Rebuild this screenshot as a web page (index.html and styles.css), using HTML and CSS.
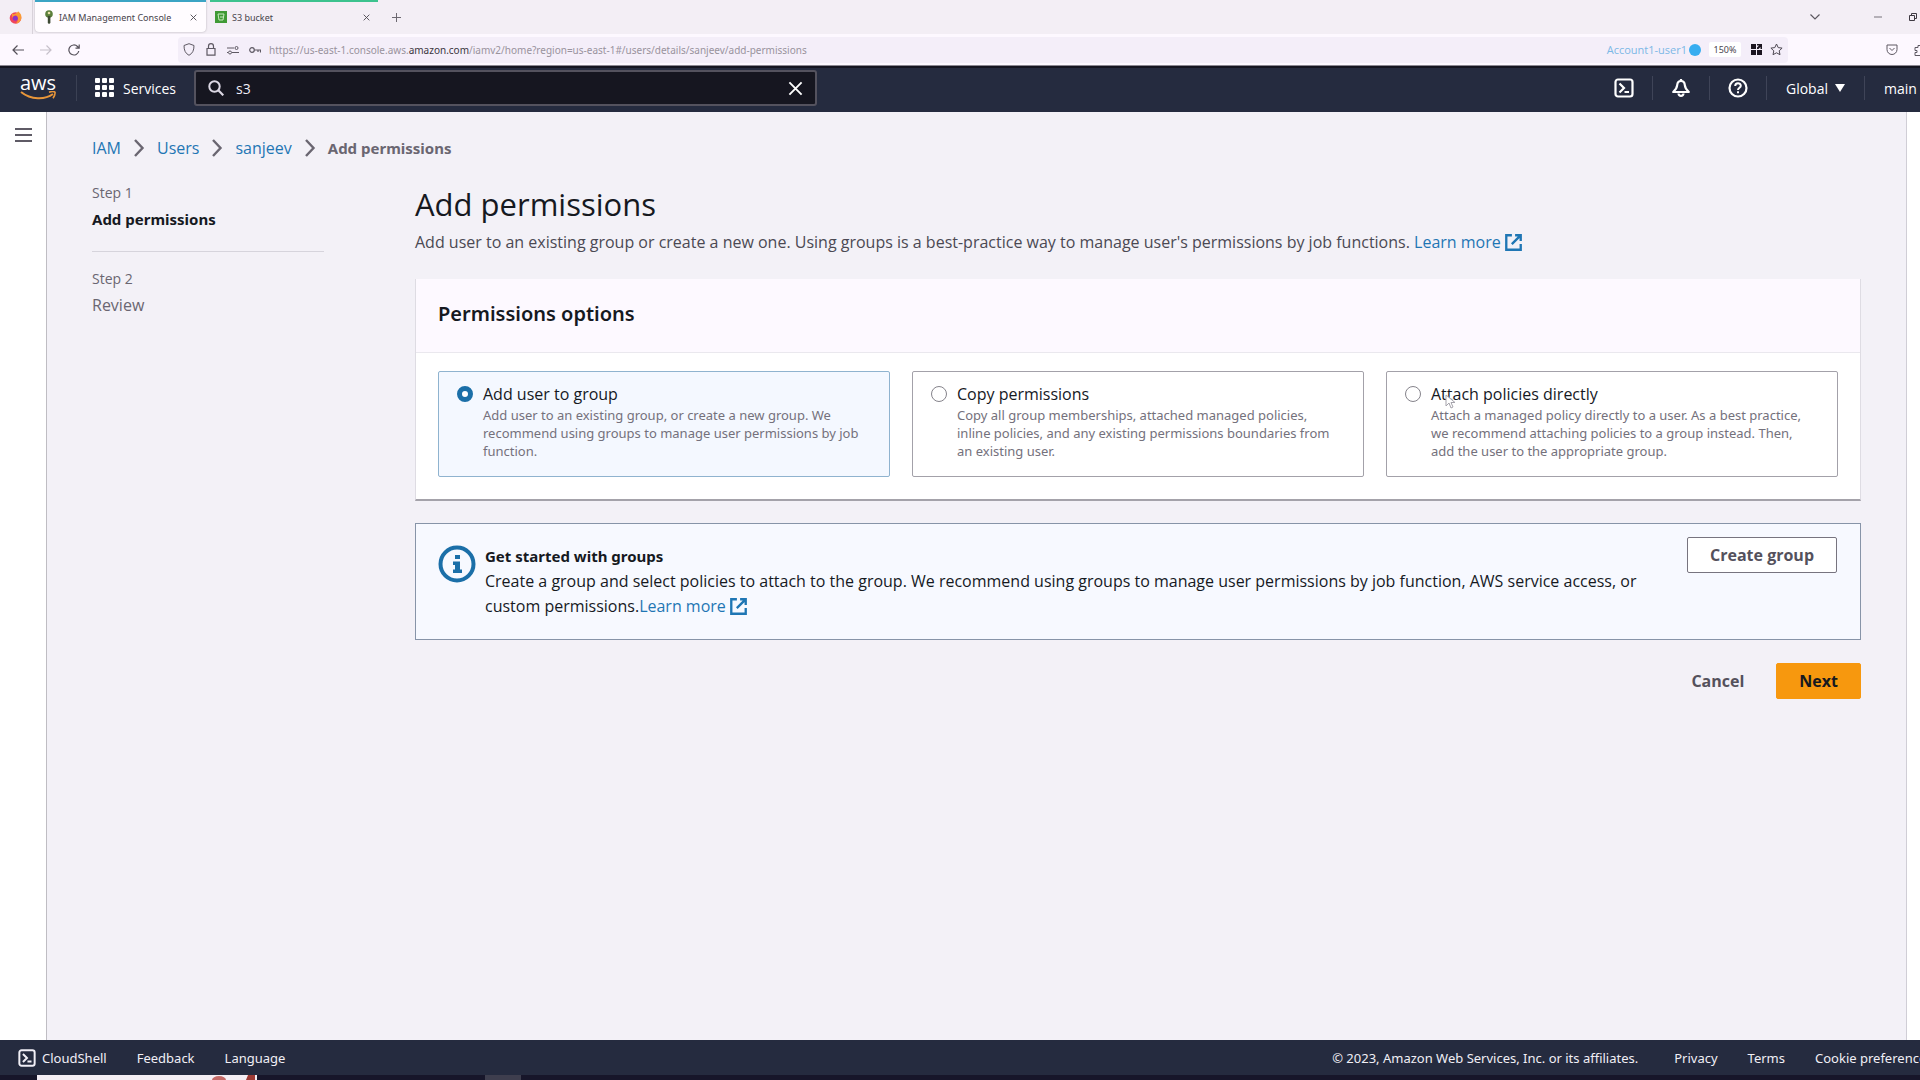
FILE: index.html
```html
<!DOCTYPE html>
<html lang="en">
<head>
  <meta charset="UTF-8">
  <meta name="viewport" content="width=device-width, initial-scale=1.0">
  <title>IAM Management Console</title>
  <link rel="stylesheet" href="styles.css">
</head>
<body>
  <!-- shared icons -->
  <svg class="defs" aria-hidden="true">
    <symbol id="i-external" viewBox="0 0 16 16">
      <path d="M6.5 1.2H1.2v13.6h13.6V9.5M9.5 1.2h5.3v5.3M14.4 1.6L6.4 9.6" fill="none" stroke="currentColor" stroke-width="2.2"/>
    </symbol>
    <symbol id="i-shell" viewBox="0 0 20 20">
      <rect x="1.5" y="1.5" width="17" height="17" rx="2.5" fill="none" stroke="currentColor" stroke-width="2.2"/>
      <path d="M5.5 5.5L10 10l-4.5 4.5M10.5 14h4.5" fill="none" stroke="currentColor" stroke-width="2.2"/>
    </symbol>
    <symbol id="i-chevron" viewBox="0 0 12 18">
      <path d="M2 1l7.500 8L2 17" fill="none" stroke="currentColor" stroke-width="2.4"/>
    </symbol>
    <symbol id="i-close" viewBox="0 0 16 16">
      <path d="M1.5 1.5l13 13M14.5 1.5l-13 13" fill="none" stroke="currentColor" stroke-width="2"/>
    </symbol>
  </svg>

  <div class="tabs">
    <div class="firefox">
      <svg width="13" height="13" viewBox="0 0 13 13">
        <circle cx="6.5" cy="7" r="5.800" fill="#f0455c"/>
        <path d="M3 2l1.500 1.500C8 2 9 1.500 9 .3c3 2 4 5 3.200 7.700-.6 2.500-3 4.600-5.700 4.600C9 11 9.500 8 8 5 6 4 4 5 3.200 7z" fill="#fb9a34"/>
        <circle cx="6.300" cy="7.300" r="2.500" fill="#8a35c9"/>
      </svg>
    </div>
    <div class="tab active">
      <svg width="10" height="14" viewBox="0 0 10 14">
        <circle cx="5" cy="4" r="3.800" fill="#5b7f3c"/>
        <path d="M3.800 6h2.600v7L5 14l-1.200-1z" fill="#3d4a34"/>
        <circle cx="5" cy="3" r="1.300" fill="#e9e2a8"/>
      </svg>
      <span>IAM Management Console</span>
      <button class="tab-close" aria-label="Close tab"><svg width="7" height="7"><use href="#i-close"/></svg></button>
    </div>
    <div class="tab bucket">
      <svg width="12" height="12" viewBox="0 0 12 12">
        <rect width="12" height="12" fill="#3f9a35"/>
        <path d="M3 3h6l-1 6H4zM5 6h4" fill="none" stroke="#c9ecc0" stroke-width="1"/>
      </svg>
      <span>S3 bucket</span>
      <button class="tab-close" aria-label="Close tab"><svg width="7" height="7"><use href="#i-close"/></svg></button>
    </div>
    <button class="new-tab" aria-label="New tab">
      <svg width="9" height="9" viewBox="0 0 9 9"><path d="M4.500 0v9M0 4.500h9" stroke="#6c6870"/></svg>
    </button>
    <div class="window-buttons">
      <svg width="10" height="6" viewBox="0 0 10 6"><path d="M.5.500L5 5l4.500-4.500" fill="none" stroke="#5c5860" stroke-width="1.200"/></svg>
      <svg width="8" height="8" viewBox="0 0 8 8"><path d="M0 4h8" stroke="#77737b"/></svg>
      <svg width="8" height="8" viewBox="0 0 8 8"><path d="M.5 2.500h5v5h-5zM2.500 2.500v-2h5v5h-2" fill="none" stroke="#3e3a42"/></svg>
    </div>
  </div>

  <div class="toolbar">
    <div class="toolbar-nav">
      <button aria-label="Back"><svg width="12" height="12" viewBox="0 0 12 12"><path d="M12 6H1M5.500 1.500L1 6l4.500 4.500" fill="none" stroke="#55515a" stroke-width="1.200"/></svg></button>
      <button aria-label="Forward"><svg width="12" height="12" viewBox="0 0 12 12"><path d="M0 6h11M6.500 1.500L11 6l-4.500 4.500" fill="none" stroke="#c6c0ca" stroke-width="1.200"/></svg></button>
      <button aria-label="Reload"><svg width="12" height="12" viewBox="0 0 12 12"><path d="M10.800 7A5 5 0 1 1 9.500 2.500L11 4M11.200.500V4.200H7.500" fill="none" stroke="#55515a" stroke-width="1.200"/></svg></button>
    </div>
    <div class="address">
      <div class="address-icons">
        <svg width="12" height="13" viewBox="0 0 12 13"><path d="M6 .7l5 1.800c0 5-1.500 8-5 9.800C2.500 10.500 1 7.500 1 2.500z" fill="none" stroke="#5e5963"/></svg>
        <svg width="12" height="13" viewBox="0 0 12 13"><path d="M2 5.500h8v6.700H2zM3.500 5.500V3.200a2.500 2.500 0 0 1 5 0v2.300" fill="none" stroke="#5e5963" stroke-width="1.200"/></svg>
        <svg width="12" height="10" viewBox="0 0 12 10"><path d="M0 3h7M5 7.500h7M0 7.500h1" stroke="#5e5963"/><circle cx="9.500" cy="3" r="1.500" fill="none" stroke="#5e5963"/><circle cx="3" cy="7.500" r="1.500" fill="none" stroke="#5e5963"/></svg>
        <svg width="12" height="8" viewBox="0 0 12 8"><circle cx="3" cy="4" r="2.300" fill="none" stroke="#5e5963" stroke-width="1.200"/><path d="M5.300 4h6.200v2.500M9 4v2" fill="none" stroke="#5e5963" stroke-width="1.200"/></svg>
      </div>
      <span class="url">https://us-east-1.console.aws.<b>amazon.com</b>/iamv2/home?region=us-east-1#/users/details/sanjeev/add-permissions</span>
      <span class="container-name">Account1-user1</span>
      <span class="container-dot"></span>
      <span class="zoom-level">150%</span>
      <svg width="11" height="11" viewBox="0 0 11 11"><path d="M0 0h5v5H0zM0 6h5v5H0zM6 6h5v5H6zM6 0h5v5H9.500V3L7.500 5H6V3.500l2-2H6z" fill="#1b1520"/></svg>
      <svg width="13" height="13" viewBox="0 0 13 13"><path d="M6.500 1l1.700 3.600 3.900.5-2.900 2.700.8 3.900-3.500-1.900L3 11.700l.8-3.900L.9 5.100l3.900-.5z" fill="none" stroke="#4d4852"/></svg>
    </div>
    <div class="toolbar-end">
      <svg width="12" height="12" viewBox="0 0 12 12"><path d="M1 1h10v4.500a5 5 0 0 1-10 0zM3.500 4L6 6.500 8.500 4" fill="none" stroke="#5e5963"/></svg>
      <svg width="6" height="12" viewBox="0 0 6 12"><path d="M7 1.500H4v2H1v3h2v2H1v3h6" fill="none" stroke="#5e5963"/></svg>
    </div>
  </div>

  <header class="aws-nav">
    <a class="logo" href="#" aria-label="AWS home">
      <span>aws</span>
      <svg width="37" height="10" viewBox="0 0 37 10"><path d="M1 1c10 8 24 8 32 2" fill="none" stroke="#e8963a" stroke-width="2"/><path d="M29 1.200c3-1 5-1 6 0 .3 2-.5 4-2 6" fill="none" stroke="#e8963a" stroke-width="1.600"/></svg>
    </a>
    <button class="services">
      <svg width="20" height="20" viewBox="0 0 20 20" fill="#fff">
        <rect width="5" height="5" rx="1"/><rect x="7" width="5" height="5" rx="1"/><rect x="14" width="5" height="5" rx="1"/>
        <rect y="7" width="5" height="5" rx="1"/><rect x="7" y="7" width="5" height="5" rx="1"/><rect x="14" y="7" width="5" height="5" rx="1"/>
        <rect y="14" width="5" height="5" rx="1"/><rect x="7" y="14" width="5" height="5" rx="1"/><rect x="14" y="14" width="5" height="5" rx="1"/>
      </svg>
      Services
    </button>
    <div class="search">
      <svg width="16" height="16" viewBox="0 0 16 16"><circle cx="6.500" cy="6.500" r="5.200" fill="none" stroke="#dcd8e4" stroke-width="2"/><path d="M10.300 10.300L15.300 15.300" stroke="#dcd8e4" stroke-width="2.200"/></svg>
      <input type="text" value="s3" aria-label="Search">
      <button aria-label="Clear search"><svg width="15" height="15"><use href="#i-close"/></svg></button>
    </div>
    <div class="nav-tools">
      <button aria-label="CloudShell"><svg width="20" height="20"><use href="#i-shell"/></svg></button>
      <button aria-label="Notifications">
        <svg width="20" height="20" viewBox="0 0 20 20"><path d="M10 3c-2.500 0-3.600 1.500-3.800 4-.2 3-1.300 4.500-4 7h15.600c-2.700-2.500-3.800-4-4-7-.2-2.500-1.300-4-3.800-4z" fill="none" stroke="#fff" stroke-width="2.200" stroke-linejoin="round"/><path d="M10 1v2M7.500 15.500c.3 3.200 4.700 3.200 5 0" fill="none" stroke="#fff" stroke-width="2.200"/></svg>
      </button>
      <button aria-label="Help">
        <svg width="20" height="20" viewBox="0 0 20 20"><circle cx="10" cy="10" r="8.500" fill="none" stroke="#fff" stroke-width="2.200"/><path d="M7.200 8c0-3.600 5.600-3.600 5.600-.3 0 2-2.800 2-2.800 4.300M10 13.300v2" fill="none" stroke="#fff" stroke-width="2"/></svg>
      </button>
      <button class="region">Global <svg width="10" height="8" viewBox="0 0 10 8"><path d="M0 0h10L5 8z" fill="#fff"/></svg></button>
      <button class="account">main</button>
    </div>
  </header>

  <div class="page">
    <aside class="rail">
      <button aria-label="Open navigation"><svg width="17" height="16" viewBox="0 0 17 16"><path d="M0 2h17M0 8h17M0 14h17" stroke="#5f5b66" stroke-width="2"/></svg></button>
    </aside>

    <main class="content">
      <nav class="breadcrumb" aria-label="Breadcrumb">
        <a href="#">IAM</a>
        <svg width="12" height="18"><use href="#i-chevron"/></svg>
        <a href="#">Users</a>
        <svg width="12" height="18"><use href="#i-chevron"/></svg>
        <a href="#">sanjeev</a>
        <svg width="12" height="18"><use href="#i-chevron"/></svg>
        <span>Add permissions</span>
      </nav>

      <div class="wizard">
        <ol class="steps">
          <li class="current"><small>Step 1</small><span>Add permissions</span></li>
          <li><small>Step 2</small><span>Review</span></li>
        </ol>

        <form class="form">
          <h1>Add permissions</h1>
          <p class="intro">Add user to an existing group or create a new one. Using groups is a best-practice way to manage user's permissions by job functions. <a href="#">Learn more <svg width="17" height="17"><use href="#i-external"/></svg></a></p>

          <section class="panel">
            <h2>Permissions options</h2>
            <div class="options">
              <label class="option">
                <input type="radio" name="mode" checked>
                <span class="option-title">Add user to group</span>
                <span class="option-text">Add user to an existing group, or create a new group. We<br>recommend using groups to manage user permissions by job<br>function.</span>
              </label>
              <label class="option">
                <input type="radio" name="mode">
                <span class="option-title">Copy permissions</span>
                <span class="option-text">Copy all group memberships, attached managed policies,<br>inline policies, and any existing permissions boundaries from<br>an existing user.</span>
              </label>
              <label class="option">
                <input type="radio" name="mode">
                <span class="option-title">Attach policies directly
                  <svg class="pointer" width="12" height="16" viewBox="0 0 12 16"><path d="M1 1v11l3-3 2 5 2-1-2-4.500h4z" fill="#fff" stroke="#a5a3ab"/></svg>
                </span>
                <span class="option-text">Attach a managed policy directly to a user. As a best practice,<br>we recommend attaching policies to a group instead. Then,<br>add the user to the appropriate group.</span>
              </label>
            </div>
          </section>

          <section class="info">
            <svg class="info-icon" width="38" height="38" viewBox="0 0 38 38"><circle cx="19" cy="19" r="16.500" fill="none" stroke="#1b6fa8" stroke-width="4"/><path d="M17 10h5v4h-5zM15 16.500h7v8h2v3.500h-9v-3.500h2v-4.500h-2z" fill="#1b6fa8"/></svg>
            <div class="info-text">
              <strong>Get started with groups</strong>
              <p>Create a group and select policies to attach to the group. We recommend using groups to manage user permissions by job function, AWS service access, or<br>custom permissions.<a href="#">Learn more <svg width="17" height="17"><use href="#i-external"/></svg></a></p>
            </div>
            <button type="button" class="btn">Create group</button>
          </section>

          <div class="actions">
            <button type="button" class="btn link">Cancel</button>
            <button type="button" class="btn primary">Next</button>
          </div>
        </form>
      </div>
    </main>
    <div class="right-rail"></div>
  </div>

  <footer class="footer">
    <a href="#" class="shell"><svg width="18" height="18"><use href="#i-shell"/></svg>CloudShell</a>
    <a href="#">Feedback</a>
    <a href="#">Language</a>
    <span class="copyright">© 2023, Amazon Web Services, Inc. or its affiliates.</span>
    <a href="#">Privacy</a>
    <a href="#">Terms</a>
    <a href="#" class="cookies">Cookie preferences</a>
  </footer>
  <div class="taskbar">
    <svg class="task-search" width="220" height="5" viewBox="0 0 220 5"><path d="M0 0h220v5H0z" fill="#f4eef4"/><path d="M175 5a7 4 0 0 1 14 0z" fill="#c46a68"/><path d="M211 0h7v5h-9z" fill="#9c3a34"/></svg>
    <span class="task-item"></span>
  </div>
</body>
</html>
```

FILE: styles.css
```css
* {
  box-sizing: border-box;
}
body {
  margin: 0;
  height: 100vh;
  display: flex;
  flex-direction: column;
  overflow: hidden;
  font-family: "Open Sans", "Noto Sans", sans-serif;
  font-size: 16px;
  color: #16191f;
  background: #f3f1f7;
}
button {
  font: inherit;
  color: inherit;
  background: none;
  border: none;
  padding: 0;
  cursor: pointer;
}
svg {
  flex: none;
}
a {
  color: #1f76b4;
  text-decoration: none;
}
.defs {
  position: absolute;
  width: 0;
  height: 0;
}

/* browser chrome */
.tabs {
  display: flex;
  align-items: stretch;
  height: 34px;
  flex: none;
  background: #f3eef5;
  font-family: "Noto Sans", sans-serif;
  font-size: 9px;
  color: #47434b;
}
.firefox {
  width: 33px;
  display: flex;
  align-items: center;
  padding-left: 9px;
  border-right: 1px solid #d8d2da;
}
.tab {
  display: flex;
  align-items: center;
  gap: 5px;
  width: 171px;
  margin: 0 2px 2px;
  padding: 0 9px;
  border-top: 2px solid #3ba4c4;
}
.tab.active {
  background: #fffcff;
  border-radius: 0 0 4px 4px;
  box-shadow: 0 0 2px #a8a2aa;
}
.tab.bucket {
  width: 168px;
  padding: 0 8px 0 5px;
  border-top-color: #3cc28e;
}
.tab-close {
  margin-left: auto;
  display: flex;
}
.new-tab {
  display: flex;
  align-items: center;
  margin-left: 12px;
}
.window-buttons {
  display: flex;
  align-items: center;
  margin-left: auto;
  gap: 27px;
  padding-right: 3px;
}
.window-buttons svg:first-child {
  margin-right: 27px;
}
.toolbar {
  display: flex;
  align-items: center;
  height: 32px;
  flex: none;
  background: #fdf8ff;
  border-bottom: 1px solid #8b8791;
}
.toolbar-nav {
  display: flex;
  gap: 16px;
  width: 178px;
  padding-left: 12px;
}
.toolbar-nav button {
  display: flex;
}
.address {
  flex: 1;
  display: flex;
  align-items: center;
  gap: 8px;
  height: 26px;
  padding: 0 5px;
  background: #f4eef9;
  border-radius: 4px;
  font-family: "Noto Sans", sans-serif;
  font-size: 10px;
  color: #99939d;
}
.address-icons {
  display: flex;
  align-items: center;
  gap: 10px;
}
.url {
  margin-right: auto;
}
.url b {
  font-weight: normal;
  color: #3b3640;
}
.container-name {
  font-family: "Open Sans", sans-serif;
  font-size: 11px;
  color: #7cb8e6;
}
.container-dot {
  width: 12px;
  height: 12px;
  margin-left: -6px;
  border-radius: 50%;
  background: #37adf0;
}
.zoom-level {
  width: 32px;
  margin-right: 2px;
  text-align: center;
  font-size: 9px;
  line-height: 15px;
  color: #4a454f;
  background: #fff;
  border-radius: 2px;
}
.toolbar-end {
  display: flex;
  justify-content: flex-end;
  gap: 16px;
  width: 132px;
}

/* console header */
.aws-nav {
  display: flex;
  align-items: center;
  height: 46px;
  flex: none;
  padding-bottom: 2px;
  background: #252b3f;
  box-shadow: inset 0 2px #151521;
  color: #fff;
  font-size: 14px;
}
.logo {
  display: flex;
  flex-direction: column;
  align-items: center;
  width: 77px;
  color: #fff;
  font-size: 20px;
  line-height: 16px;
  border-right: 1px solid #3b4154;
}
.services {
  display: flex;
  align-items: center;
  gap: 8px;
  width: 117px;
  padding-left: 18px;
}
.search {
  display: flex;
  align-items: center;
  gap: 12px;
  width: 623px;
  height: 36px;
  padding: 0 12px;
  background: #161620;
  border: 2px solid #54525e;
  border-radius: 3px;
}
.search input {
  flex: 1;
  min-width: 0;
  padding: 0;
  border: none;
  outline: none;
  background: none;
  color: #f0edf5;
  font: inherit;
}
.search button {
  display: flex;
}
.nav-tools {
  display: flex;
  margin-left: auto;
}
.nav-tools button {
  display: flex;
  align-items: center;
  justify-content: center;
  width: 57px;
  height: 24px;
  border-right: 1px solid #3f4458;
}
.nav-tools .region {
  width: 98px;
  gap: 7px;
}
.nav-tools .account {
  justify-content: flex-start;
  width: 55px;
  padding-left: 19px;
  border: none;
}

/* page */
.page {
  flex: 1;
  display: flex;
  min-height: 0;
}
.rail {
  width: 47px;
  padding: 15px 0 0 15px;
  background: #fff;
  border-right: 1px solid #bfbdc3;
}
.rail button {
  display: block;
}
.rail svg {
  display: block;
}
.right-rail {
  width: 14px;
  background: #fff;
  border-left: 1px solid #d0ced6;
}
.content {
  flex: 1;
  padding: 24px 45px 0;
}
.breadcrumb {
  display: flex;
  align-items: center;
  gap: 12px;
  height: 24px;
  font-size: 16px;
  color: #6a6671;
}
.breadcrumb span {
  font-family: "Noto Sans", sans-serif;
  font-size: 15px;
  font-weight: 700;
}
.wizard {
  display: grid;
  grid-template-columns: 232px 1fr;
  column-gap: 91px;
  margin-top: 20px;
}
.steps {
  list-style: none;
  margin: 0;
  padding: 0;
  color: #6a6671;
  line-height: 26px;
}
.steps li {
  padding-top: 14px;
}
.steps small,
.steps span {
  display: block;
}
.steps small {
  font-size: 14px;
}
.steps .current {
  padding: 0 0 19px;
  border-bottom: 1px solid #d6d4dc;
}
.steps .current span {
  color: #16191f;
  font-family: "Noto Sans", sans-serif;
  font-size: 15px;
  font-weight: 700;
}
h1 {
  margin: 0;
  font-size: 31px;
  font-weight: 400;
  line-height: 48px;
}
.intro {
  margin: 0;
  line-height: 28px;
  color: #4b4953;
}
a svg {
  vertical-align: -3px;
}
.panel {
  margin-top: 23px;
  background: #fff;
  border: 1px solid #dedce3;
  border-top: none;
  border-bottom: 2px solid #a4a2aa;
}
h2 {
  margin: 0;
  padding: 21px 22px 24px;
  font-family: "Noto Sans", sans-serif;
  font-size: 20px;
  line-height: 28px;
  font-weight: 600;
  background: #fdf9ff;
  border-bottom: 1px solid #eae8ee;
}
.options {
  display: grid;
  grid-template-columns: repeat(3, 1fr);
  gap: 22px;
  padding: 18px 22px 22px;
}
.option {
  display: grid;
  grid-template-columns: 16px 1fr;
  column-gap: 10px;
  padding: 10px 0 15px 18px;
  border: 1px solid #a3a1a9;
  border-radius: 2px;
  white-space: nowrap;
}
.option:has(input:checked) {
  background: #f4f8ff;
  border-color: #8fb3cf;
}
.option input {
  appearance: none;
  align-self: center;
  width: 16px;
  height: 16px;
  margin: 0;
  border: 1px solid #85838b;
  border-radius: 50%;
  background: #fff;
}
.option input:checked {
  border: 5px solid #1b6fa8;
}
.option-title {
  position: relative;
  line-height: 24px;
}
.option-text {
  grid-column: 2;
  font-family: "Noto Sans", sans-serif;
  font-size: 13px;
  line-height: 18px;
  padding-bottom: 1px;
  color: #74717c;
}
.pointer {
  position: absolute;
  left: 14px;
  top: 12px;
}
.info {
  display: flex;
  align-items: flex-start;
  gap: 9px;
  margin-top: 22px;
  padding: 13px 23px 20px 22px;
  background: #f7f9ff;
  border: 1px solid #8794a8;
}
.info-icon {
  margin-top: 8px;
}
.info-text {
  flex: 1;
  padding-top: 7px;
  line-height: 25px;
}
.info-text strong {
  display: block;
  font-family: "Noto Sans", sans-serif;
  font-size: 15px;
}
.info-text p {
  margin: 0;
}
.btn {
  height: 36px;
  padding: 0 22px;
  font-weight: 700;
  color: #54515c;
  background: #fff;
  border: 1px solid #77747f;
  border-radius: 2px;
}
.actions {
  display: flex;
  justify-content: flex-end;
  gap: 9px;
  margin-top: 23px;
}
.btn.link {
  background: none;
  border-color: transparent;
}
.btn.primary {
  color: #16191f;
  background: #f7980e;
  border-color: #f7980e;
}

/* bottom bars */
.footer {
  display: flex;
  align-items: center;
  height: 35px;
  flex: none;
  gap: 30px;
  padding-left: 18px;
  background: #252b3f;
  color: #f1eff6;
  font-family: "Noto Sans", sans-serif;
  font-size: 13px;
  white-space: nowrap;
}
.footer a {
  color: inherit;
}
.footer .shell {
  display: flex;
  align-items: center;
  gap: 6px;
}
.copyright {
  margin-left: auto;
  margin-right: 6px;
}
.cookies {
  width: 105px;
  overflow: hidden;
}
.taskbar {
  display: flex;
  flex: none;
  height: 5px;
  padding-left: 37px;
  background: #17162a;
}
.task-item {
  width: 36px;
  margin-left: 228px;
  background: #3e3e4e;
}
```
